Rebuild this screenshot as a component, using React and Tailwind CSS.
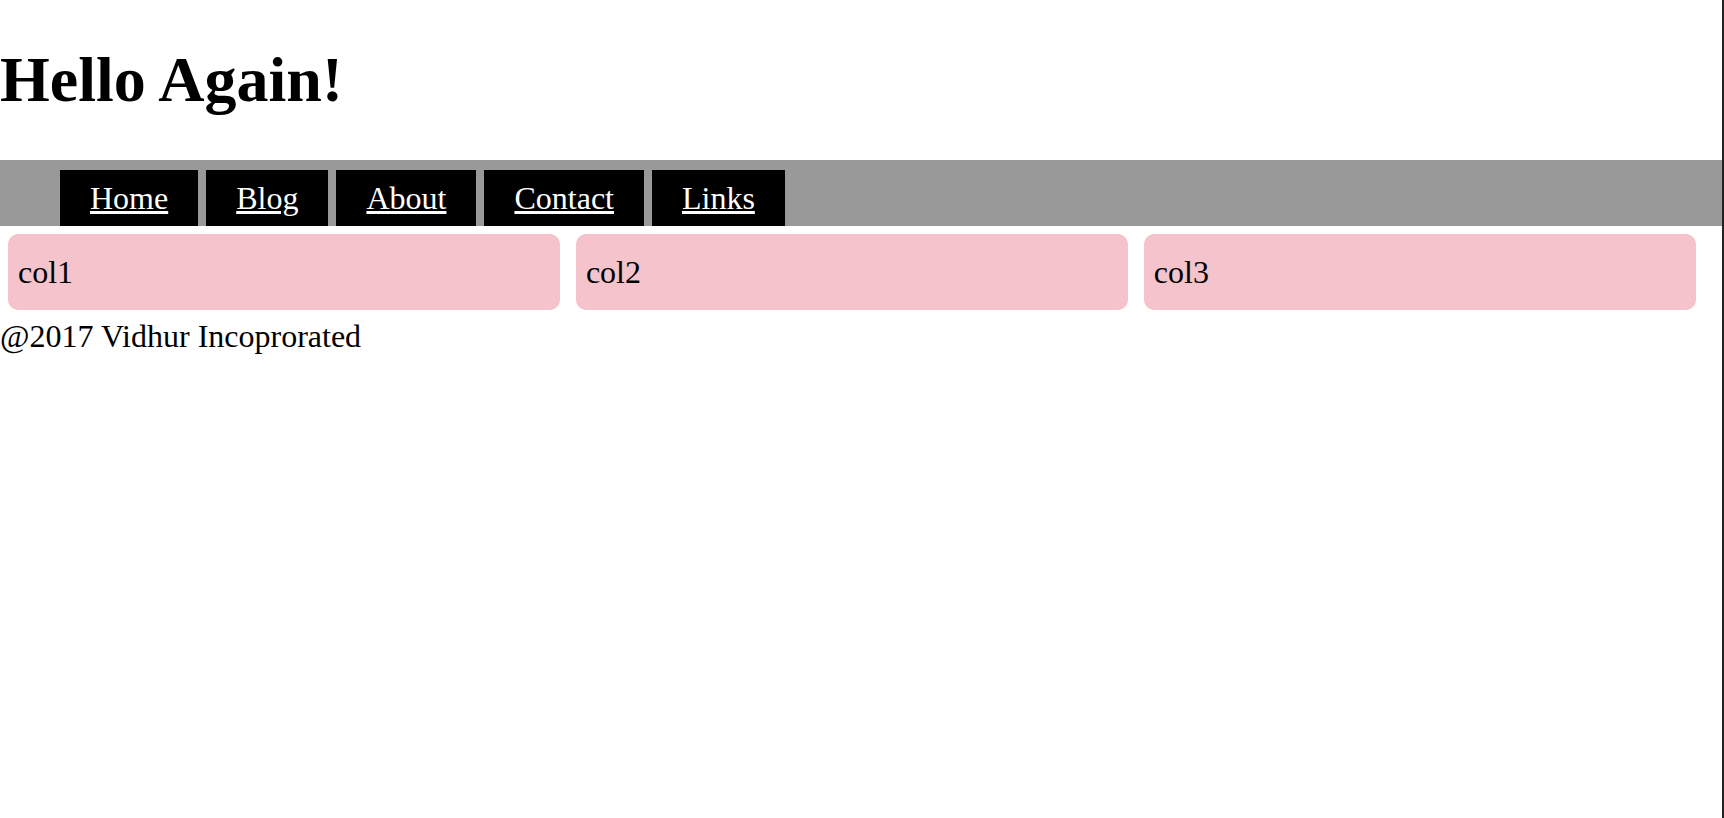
import React from 'react';

const links = ['Home', 'Blog', 'About', 'Contact', 'Links'];
const cols = ['col1', 'col2', 'col3'];

const App = () => {
  return (
    <div className="flex min-h-screen bg-white font-['Liberation_Serif',serif] text-black">
      <div className="flex-1">
        {/* Header */}
        <h1 className="my-[43px] text-[64px] font-bold leading-[normal]">Hello Again!</h1>

        {/* Nav */}
        <nav className="flex gap-2 bg-[#999999] pt-[10px] pl-[60px]">
          {links.map((l) => (
            <a
              key={l}
              href="#"
              className="bg-black px-[30px] py-[10px] text-[32px] leading-[36px] text-white underline"
            >
              {l}
            </a>
          ))}
        </nav>

        {/* Columns */}
        <div className="flex">
          {cols.map((c) => (
            <div
              key={c}
              className="m-[8px] w-[32.05%] rounded-[10px] bg-[#f5c3cb] px-[10px] py-[20px] text-[32px] leading-[36px]"
            >
              {c}
            </div>
          ))}
        </div>

        <footer className="text-[32px] leading-[normal]">@2017 Vidhur Incoprorated</footer>
      </div>
      <div className="w-[2px] bg-[#232326]"></div>
    </div>
  );
};

export default App;
